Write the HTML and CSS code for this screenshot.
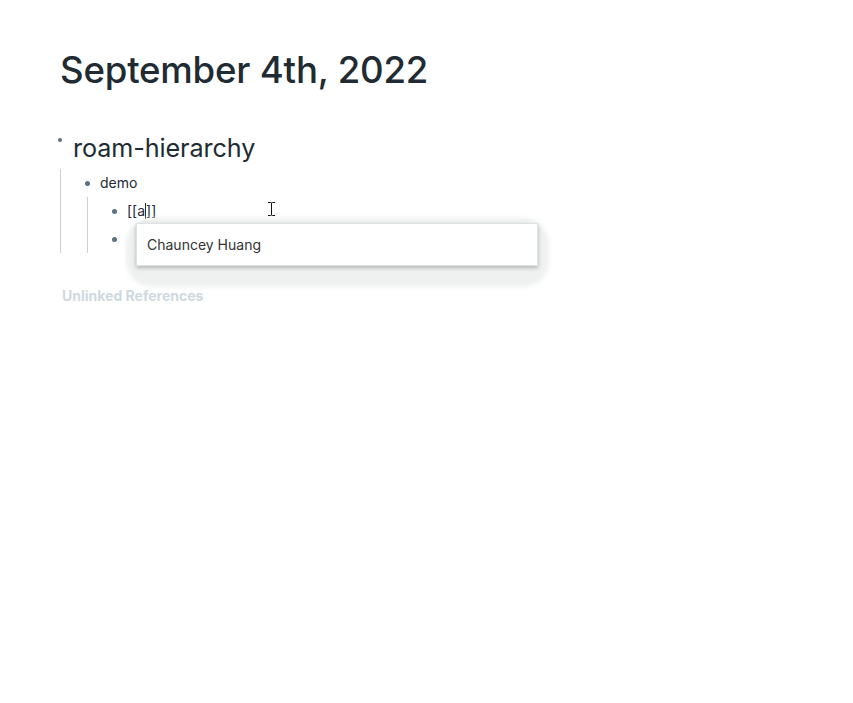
FILE: index.html
```html
<!DOCTYPE html>
<html>
<head>
<meta charset="utf-8">
<link rel="stylesheet" href="styles.css">
</head>
<body>
<div class="page">
  <h1 class="title">September 4th, 2022</h1>
  <div class="block top">
    <div class="row">
      <span class="bullet small"></span>
      <span class="h-text">roam-hierarchy</span>
    </div>
    <div class="children">
      <div class="block">
        <div class="row">
          <span class="bullet"></span>
          <span class="text">demo</span>
        </div>
        <div class="children">
          <div class="row">
            <span class="bullet"></span>
            <span class="text">[[a<span class="caret"></span>]]</span>
          </div>
          <div class="row">
            <span class="bullet"></span>
            <span class="text">&nbsp;</span>
          </div>
        </div>
      </div>
    </div>
  </div>
  <div class="refs">Unlinked References</div>

  <div class="halo"></div>
  <div class="popup">Chauncey Huang</div>
  <svg class="ibeam" width="9" height="16" viewBox="0 0 9 16">
    <path d="M1 1.5h2.5M5.5 1.5H8M4.5 2v12M1 14.5h2.5M5.5 14.5H8M3.5 1.5Q4.5 1.5 4.5 2.5M5.5 1.5Q4.5 1.5 4.5 2.5M3.5 14.5Q4.5 14.5 4.5 13.5M5.5 14.5Q4.5 14.5 4.5 13.5" stroke="#111" stroke-width="1" fill="none"/>
  </svg>
</div>
</body>
</html>
```
FILE: styles.css
```css
html, body {
  margin: 0;
  padding: 0;
  background: #fff;
}
body {
  font-family: Inter, "Noto Sans", sans-serif;
  color: #202b33;
}
.page {
  position: relative;
  width: 853px;
  height: 703px;
  padding: 48px 0 0 60px;
  box-sizing: border-box;
}
.title {
  margin: 0;
  font-size: 36.6px;
  font-weight: 500;
  line-height: 44px;
  letter-spacing: -0.2px;
  color: #202b33;
}
.block.top {
  margin-top: 40px;
}
.row {
  display: flex;
  align-items: center;
  height: 28px;
}
.top > .row {
  height: 32px;
  align-items: flex-start;
}
.bullet {
  width: 5px;
  height: 5px;
  border-radius: 50%;
  background: #5c7080;
  flex: none;
  margin-left: 24px;
  margin-right: 10px;
}
.bullet.small {
  margin-left: -2px;
  margin-right: 11px;
  margin-top: 6px;
  width: 4px;
  height: 4px;
}
.h-text {
  font-size: 25.2px;
  line-height: 32px;
  font-weight: 400;
  color: #202b33;
  letter-spacing: -0.1px;
}
.text {
  font-size: 14px;
  line-height: 20px;
  color: #202b33;
  position: relative;
}
.children {
  border-left: 1px solid #c8d1d9;
  margin-top: 5px;
}
.children .children {
  margin-left: 26px;
  margin-top: 0;
}
.caret {
  display: inline-block;
  width: 1px;
  height: 16px;
  background: #202b33;
  vertical-align: -3px;
}
.refs {
  margin-top: 34px;
  margin-left: 2px;
  font-size: 14px;
  font-weight: 700;
  color: #ced9e0;
}
.halo {
  position: absolute;
  left: 126px;
  top: 218px;
  width: 423px;
  height: 69px;
  border-radius: 26px;
  background: #eff1f1;
  filter: blur(2px);
}
.popup {
  position: absolute;
  left: 136px;
  top: 223px;
  width: 402px;
  height: 43px;
  box-sizing: border-box;
  padding: 0 10px;
  display: flex;
  align-items: center;
  background: #fff;
  border: 1px solid #dde2e6;
  box-shadow: 0 2px 4px rgba(0, 0, 0, 0.25);
  font-size: 14px;
  color: #333;
}
.ibeam {
  position: absolute;
  left: 267px;
  top: 201px;
}
```
